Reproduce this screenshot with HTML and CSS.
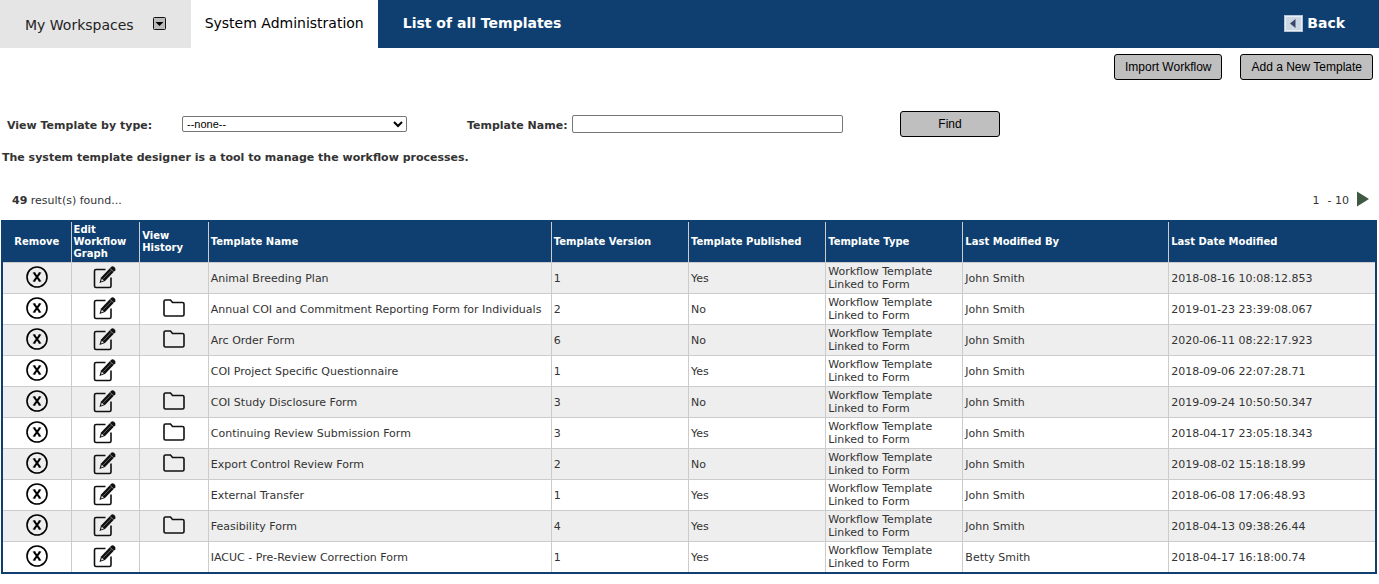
FILE: index.html
```html
<!DOCTYPE html>
<html lang="en">
<head>
  <meta charset="UTF-8" />
  <title>List of all Templates</title>
  <link rel="stylesheet" href="styles.css">
</head>
<body>
  <!-- Shared icons -->
  <svg class="icon-defs" aria-hidden="true">
    <symbol id="icon-remove" viewBox="0 0 22 22">
      <circle cx="11" cy="11" r="10" fill="none" stroke="#000" stroke-width="1.6" />
      <path d="M8 6.8l6 8.4M14 6.8l-6 8.4" fill="none" stroke="#000" stroke-width="2" />
      <path d="M6.8 6.8h2.6M12.6 6.8h2.6M6.8 15.2h2.6M12.6 15.2h2.6" stroke="#000" stroke-width=".8" />
    </symbol>
    <symbol id="icon-edit" viewBox="0 0 24 24">
      <path d="M12.5 4.5H3Q1.5 4.5 1.5 6V21Q1.5 22.5 3 22.5H16.5Q18 22.5 18 21V12.5" fill="none" stroke="#111" stroke-width="1.6" />
      <path d="M6.5 18L8 12.5 18 2Q19.5 .5 21.3 2T22.3 5.2L12 16Z" fill="#111" />
      <path d="M10.3 13.8L18.5 5.2" stroke="#888" stroke-width=".7" />
      <path d="M17 3.4L20.8 6.8" stroke="#bbb" stroke-width=".6" />
      <path d="M8.8 13.8L10.8 15.5 8 16.4Z" fill="#eee" />
    </symbol>
    <symbol id="icon-folder" viewBox="0 0 22 18">
      <path d="M1 2.5Q1 1 2.5 1H7.5L9.5 3.5H19.5Q21 3.5 21 5V15.5Q21 17 19.5 17H2.5Q1 17 1 15.5Z" fill="none" stroke="#111" stroke-width="1.6" />
    </symbol>
  </svg>

  <header class="topbar">
    <div class="tab workspaces">
      <span>My Workspaces</span>
      <button class="drop" type="button" aria-label="Open workspaces">
        <svg width="13" height="13" viewBox="0 0 13 13">
          <rect x=".5" y=".5" width="12" height="12" rx="1" fill="#bbb" stroke="#111" />
          <path d="M2.5 5h8L6.5 9z" fill="#000" />
        </svg>
      </button>
    </div>
    <a class="tab active" href="#">System Administration</a>
    <h1>List of all Templates</h1>
    <a class="back" href="#">
      <svg width="19" height="17" viewBox="0 0 19 17">
        <rect width="19" height="17" fill="#b4c3d3" />
        <rect x="1.5" y="1.5" width="16" height="14" fill="#cbd8e4" stroke="#e8eff5" />
        <path d="M11.5 4v9L6 8.5z" fill="#3a4769" />
      </svg>
      Back
    </a>
  </header>

  <div class="actions">
    <button class="btn" type="button">Import Workflow</button>
    <button class="btn" type="button">Add a New Template</button>
  </div>

  <form class="filters">
    <label class="type-label" for="type">View Template by type:</label>
    <select id="type">
      <option>--none--</option>
    </select>
    <label class="name-label" for="name">Template Name:</label>
    <input type="text" id="name" />
    <button class="btn find" type="button">Find</button>
  </form>

  <p class="intro">The system template designer is a tool to manage the workflow processes.</p>

  <div class="results">
    <span><b>49</b> result(s) found...</span>
    <div class="pager">
      <span>1</span>
      <span>- 10</span>
      <a href="#" aria-label="Next page">
        <svg width="12" height="16" viewBox="0 0 12 16"><path d="M0 .5L12 8 0 15.5z" fill="#3f5a40" /></svg>
      </a>
    </div>
  </div>

  <table class="templates">
    <thead>
      <tr>
        <th class="narrow center">Remove</th>
        <th class="narrow">Edit Workflow Graph</th>
        <th class="narrow">View History</th>
        <th class="name">Template Name</th>
        <th class="medium">Template Version</th>
        <th class="medium">Template Published</th>
        <th class="medium">Template Type</th>
        <th class="wide">Last Modified By</th>
        <th class="wide">Last Date Modified</th>
      </tr>
    </thead>
    <tbody>
      <tr>
        <td class="icon"><button type="button" aria-label="Remove"><svg width="22" height="22"><use href="#icon-remove" /></svg></button></td>
        <td class="icon"><a href="#" aria-label="Edit"><svg width="24" height="24"><use href="#icon-edit" /></svg></a></td>
        <td class="icon"></td>
        <td>Animal Breeding Plan</td><td>1</td><td>Yes</td>
        <td class="type">Workflow Template Linked to Form</td><td>John Smith</td><td>2018-08-16 10:08:12.853</td>
      </tr>
      <tr>
        <td class="icon"><button type="button" aria-label="Remove"><svg width="22" height="22"><use href="#icon-remove" /></svg></button></td>
        <td class="icon"><a href="#" aria-label="Edit"><svg width="24" height="24"><use href="#icon-edit" /></svg></a></td>
        <td class="icon"><a href="#" aria-label="History"><svg width="22" height="18"><use href="#icon-folder" /></svg></a></td>
        <td>Annual COI and Commitment Reporting Form for Individuals</td><td>2</td><td>No</td>
        <td class="type">Workflow Template Linked to Form</td><td>John Smith</td><td>2019-01-23 23:39:08.067</td>
      </tr>
      <tr>
        <td class="icon"><button type="button" aria-label="Remove"><svg width="22" height="22"><use href="#icon-remove" /></svg></button></td>
        <td class="icon"><a href="#" aria-label="Edit"><svg width="24" height="24"><use href="#icon-edit" /></svg></a></td>
        <td class="icon"><a href="#" aria-label="History"><svg width="22" height="18"><use href="#icon-folder" /></svg></a></td>
        <td>Arc Order Form</td><td>6</td><td>No</td>
        <td class="type">Workflow Template Linked to Form</td><td>John Smith</td><td>2020-06-11 08:22:17.923</td>
      </tr>
      <tr>
        <td class="icon"><button type="button" aria-label="Remove"><svg width="22" height="22"><use href="#icon-remove" /></svg></button></td>
        <td class="icon"><a href="#" aria-label="Edit"><svg width="24" height="24"><use href="#icon-edit" /></svg></a></td>
        <td class="icon"></td>
        <td>COI Project Specific Questionnaire</td><td>1</td><td>Yes</td>
        <td class="type">Workflow Template Linked to Form</td><td>John Smith</td><td>2018-09-06 22:07:28.71</td>
      </tr>
      <tr>
        <td class="icon"><button type="button" aria-label="Remove"><svg width="22" height="22"><use href="#icon-remove" /></svg></button></td>
        <td class="icon"><a href="#" aria-label="Edit"><svg width="24" height="24"><use href="#icon-edit" /></svg></a></td>
        <td class="icon"><a href="#" aria-label="History"><svg width="22" height="18"><use href="#icon-folder" /></svg></a></td>
        <td>COI Study Disclosure Form</td><td>3</td><td>No</td>
        <td class="type">Workflow Template Linked to Form</td><td>John Smith</td><td>2019-09-24 10:50:50.347</td>
      </tr>
      <tr>
        <td class="icon"><button type="button" aria-label="Remove"><svg width="22" height="22"><use href="#icon-remove" /></svg></button></td>
        <td class="icon"><a href="#" aria-label="Edit"><svg width="24" height="24"><use href="#icon-edit" /></svg></a></td>
        <td class="icon"><a href="#" aria-label="History"><svg width="22" height="18"><use href="#icon-folder" /></svg></a></td>
        <td>Continuing Review Submission Form</td><td>3</td><td>Yes</td>
        <td class="type">Workflow Template Linked to Form</td><td>John Smith</td><td>2018-04-17 23:05:18.343</td>
      </tr>
      <tr>
        <td class="icon"><button type="button" aria-label="Remove"><svg width="22" height="22"><use href="#icon-remove" /></svg></button></td>
        <td class="icon"><a href="#" aria-label="Edit"><svg width="24" height="24"><use href="#icon-edit" /></svg></a></td>
        <td class="icon"><a href="#" aria-label="History"><svg width="22" height="18"><use href="#icon-folder" /></svg></a></td>
        <td>Export Control Review Form</td><td>2</td><td>No</td>
        <td class="type">Workflow Template Linked to Form</td><td>John Smith</td><td>2019-08-02 15:18:18.99</td>
      </tr>
      <tr>
        <td class="icon"><button type="button" aria-label="Remove"><svg width="22" height="22"><use href="#icon-remove" /></svg></button></td>
        <td class="icon"><a href="#" aria-label="Edit"><svg width="24" height="24"><use href="#icon-edit" /></svg></a></td>
        <td class="icon"></td>
        <td>External Transfer</td><td>1</td><td>Yes</td>
        <td class="type">Workflow Template Linked to Form</td><td>John Smith</td><td>2018-06-08 17:06:48.93</td>
      </tr>
      <tr>
        <td class="icon"><button type="button" aria-label="Remove"><svg width="22" height="22"><use href="#icon-remove" /></svg></button></td>
        <td class="icon"><a href="#" aria-label="Edit"><svg width="24" height="24"><use href="#icon-edit" /></svg></a></td>
        <td class="icon"><a href="#" aria-label="History"><svg width="22" height="18"><use href="#icon-folder" /></svg></a></td>
        <td>Feasibility Form</td><td>4</td><td>Yes</td>
        <td class="type">Workflow Template Linked to Form</td><td>John Smith</td><td>2018-04-13 09:38:26.44</td>
      </tr>
      <tr>
        <td class="icon"><button type="button" aria-label="Remove"><svg width="22" height="22"><use href="#icon-remove" /></svg></button></td>
        <td class="icon"><a href="#" aria-label="Edit"><svg width="24" height="24"><use href="#icon-edit" /></svg></a></td>
        <td class="icon"></td>
        <td>IACUC - Pre-Review Correction Form</td><td>1</td><td>Yes</td>
        <td class="type">Workflow Template Linked to Form</td><td>Betty Smith</td><td>2018-04-17 16:18:00.74</td>
      </tr>
    </tbody>
  </table>
</body>
</html>
```

FILE: styles.css
```css
* {
  box-sizing: border-box;
}

body {
  margin: 0;
  font-family: Verdana, "DejaVu Sans", sans-serif;
  font-size: 11px;
  line-height: 13px;
  color: #333;
  background: white;
}

a {
  color: inherit;
  text-decoration: none;
}

svg {
  display: block;
}

.icon-defs {
  display: none;
}

/* Top bar */
.topbar {
  display: flex;
  align-items: center;
  height: 48px;
  padding-right: 34px;
  background: #0f3f70;
  color: white;
  font-size: 14px;
  line-height: 18px;
}

.tab {
  display: flex;
  align-items: center;
  height: 100%;
  padding: 0 14px 2px;
  background: white;
  color: #000;
}

.workspaces {
  gap: 19px;
  padding: 2px 25px 0;
  background: #e5e5e5;
  color: #222;
}

.drop {
  padding: 0 0 4px;
  border: none;
  background: none;
  cursor: pointer;
}

h1 {
  margin: 0 0 2px 25px;
  font-size: 14px;
  font-weight: bold;
}

.back {
  display: flex;
  align-items: center;
  gap: 4px;
  margin: 0 0 2px auto;
  font-weight: bold;
}

/* Buttons and filters */
.btn {
  height: 26px;
  padding: 0 10px;
  border: 1px solid #000;
  border-radius: 3px;
  background: #bfbfbf;
  color: #000;
  font-family: Arial, "Liberation Sans", sans-serif;
  font-size: 12px;
  cursor: pointer;
}

.actions {
  display: flex;
  justify-content: flex-end;
  gap: 18px;
  padding: 6px 6px 0;
}

.filters {
  display: flex;
  align-items: center;
  margin-top: 31px;
  padding-left: 7px;
  font-weight: bold;
}

.filters label {
  padding-top: 2px;
}

.type-label {
  width: 175px;
}

.filters select,
.filters input {
  border: 1px solid #767676;
  border-radius: 2px;
  background: white;
  color: #000;
  font-family: Arial, "Liberation Sans", sans-serif;
  font-size: 11px;
}

.filters select {
  width: 225px;
  height: 16px;
  padding: 0;
}

.name-label {
  width: 105px;
  margin-left: 60px;
}

.filters input {
  width: 271px;
  height: 18px;
  padding: 0 2px;
}

.find {
  width: 100px;
  margin-left: 57px;
}

.intro {
  margin: 14px 2px 0;
  font-weight: bold;
}

.results {
  display: flex;
  align-items: center;
  justify-content: space-between;
  margin-top: 27px;
  padding: 0 10px 0 12px;
}

.results span {
  padding-top: 2px;
}

.pager {
  display: flex;
  align-items: center;
  gap: 8px;
}

/* Template list */
.templates {
  width: calc(100% - 3px);
  margin: 13px 2px 10px 1px;
  border: 2px solid #0f3f70;
  border-collapse: separate;
  border-spacing: 0;
  table-layout: fixed;
}

th, td {
  padding: 3px 2px 2px;
  border-right: 1px solid #ccc;
  text-align: left;
  vertical-align: middle;
}

th:last-child,
td:last-child {
  border-right: none;
}

th {
  height: 40px;
  padding: 2px;
  background: #0f3f70;
  color: white;
  font-size: 10px;
  line-height: 12px;
}

td {
  height: 31px;
  border-top: 1px solid #ccc;
}

tbody tr:nth-child(odd) {
  background: #eee;
}

.narrow {
  width: 5%;
}

.name {
  width: 25%;
}

.medium {
  width: 10%;
}

.wide {
  width: 15%;
}

.center {
  text-align: center;
}

td.icon {
  padding: 0 2px 2px;
}

.icon button,
.icon a {
  display: block;
  width: fit-content;
  margin: 0 auto;
  padding: 0;
  border: none;
  background: none;
  cursor: pointer;
}

td.type {
  padding: 0 2px;
}
```
